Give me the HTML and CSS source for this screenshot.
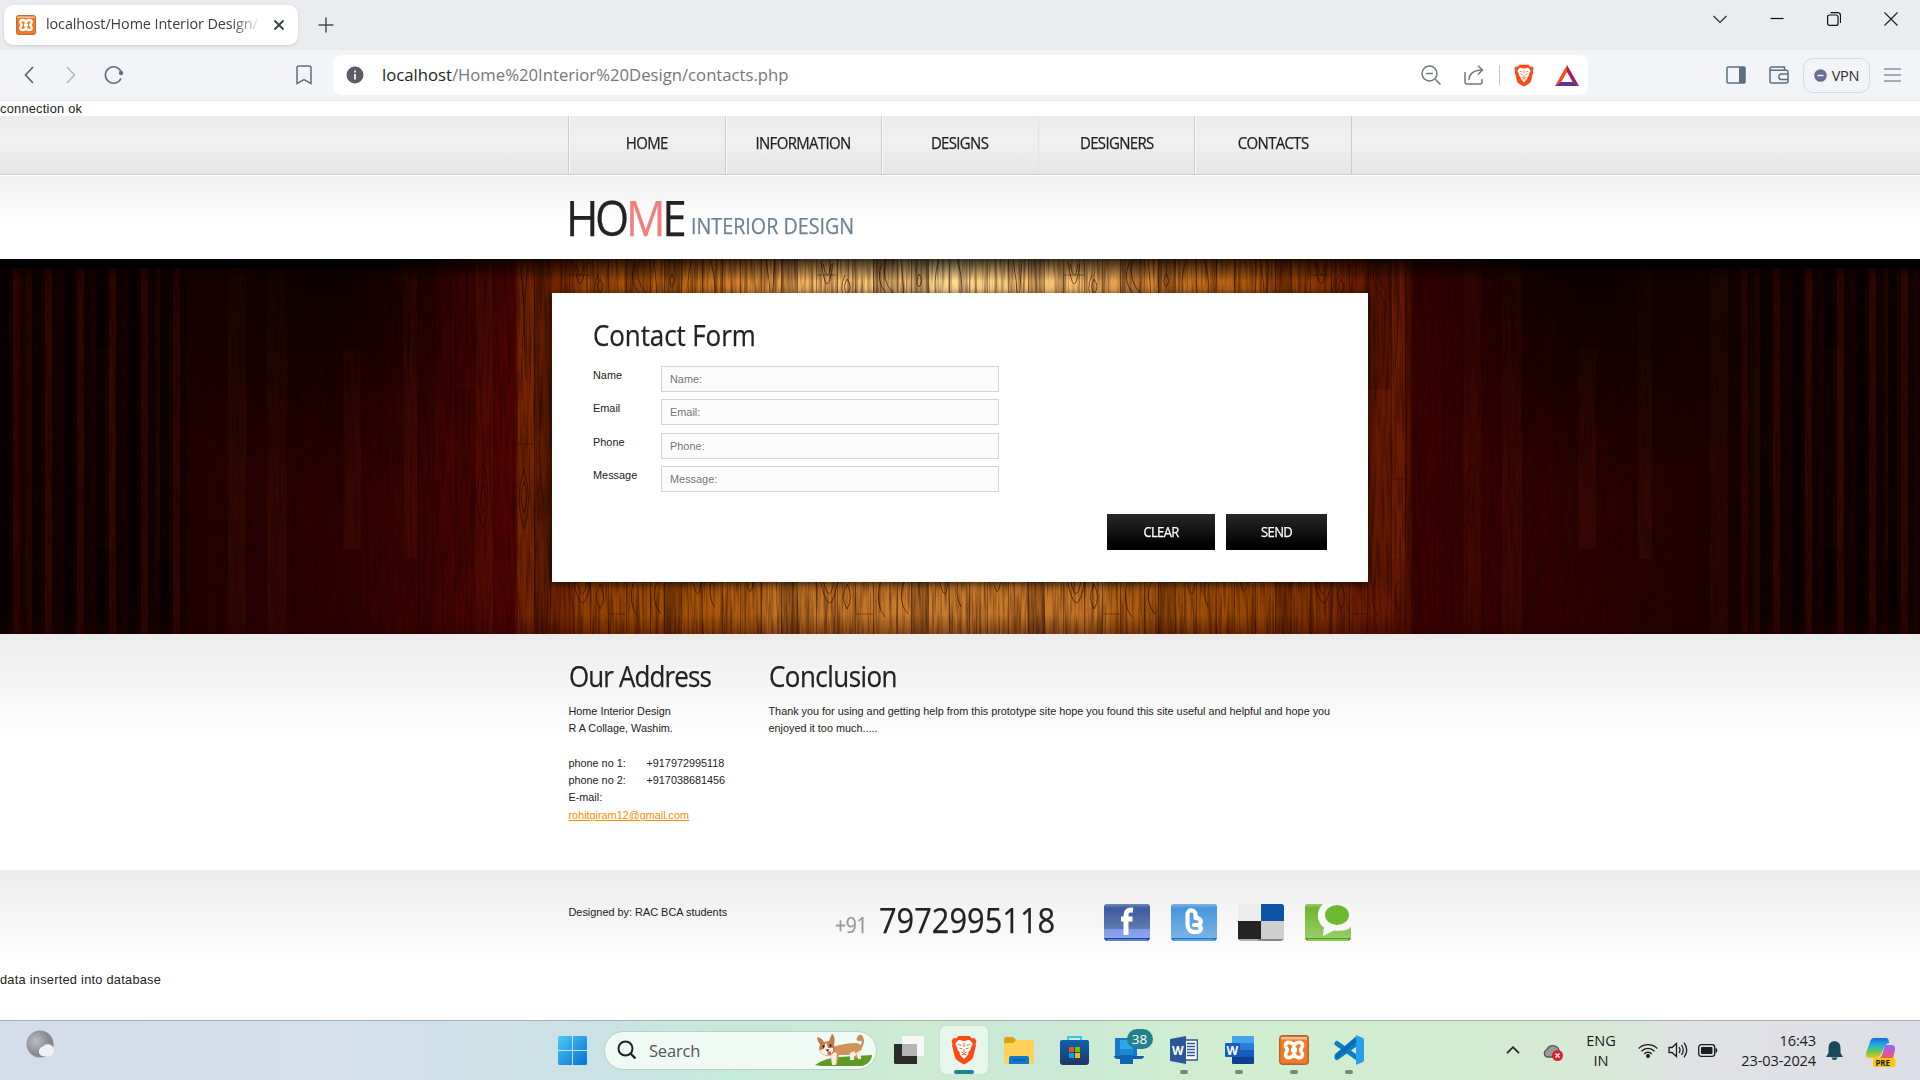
FILE: index.html
```html
<!DOCTYPE html>
<html lang="en">
<head>
<meta charset="utf-8">
<title>Home Interior Design</title>
<link rel="stylesheet" href="styles.css">
</head>
<body>
<svg width="0" height="0" class="defs">
  <defs>
    <symbol id="xampp" viewBox="0 0 30 30">
      <rect x=".7" y=".7" width="28.6" height="28.6" rx="3" fill="#f37a20" stroke="#a8673a" stroke-width="1.4"/>
      <path d="M2 2h26v2.500H2z" fill="#f9b98a"/>
      <path d="M15 11.500c-.5-4.500-7.500-5.500-8.500-1.800-.5 2.300 1.700 3.800 2 5.300-.3 1.500-2.500 3-2 5.300 1 3.700 8 2.700 8.500-1.800.5 4.500 7.500 5.500 8.500 1.800.5-2.300-1.700-3.800-2-5.300.3-1.500 2.500-3 2-5.300-1-3.700-8-2.700-8.500 1.800z" fill="none" stroke="#fff" stroke-width="3.600" stroke-linejoin="round"/>
      <path d="M12 15h6" stroke="#fff" stroke-width="4.500"/>
    </symbol>
    <symbol id="brave" viewBox="0 0 26 30">
      <path d="M7.500 1h11l2.500 2.500 2.500-.5 2 3-1 3 .5 1.500-3 12c-.5 2-5 5-9 7-4-2-8.500-5-9-7L1 10.500 1.500 9 .5 6l2-3L5 3.500z" fill="#fb4a14"/>
      <path d="M13 6c2 0 4-1.500 5.500-.8 1.500.8 3.500 3 3 4.600-.3 1-2 2.200-1.800 3.500.3 1.600-1.500 3.200-2.500 4.200.6 1.500-.5 2.500-1.200 3.500L13 24l-3-3c-.7-1-1.800-2-1.200-3.500-1-1-2.800-2.600-2.500-4.200.2-1.300-1.500-2.500-1.800-3.500-.5-1.600 1.500-3.800 3-4.600C9 4.500 11 6 13 6z" fill="#fff"/>
      <path d="M13 8v4m-5.500-2.500 3 .8M18.500 9.500l-3 .8M8.500 13l2.500.8M17.500 13l-2.500.8M13 14v3m-2.500 0L13 18.500l2.500-1.500M10.500 20l2.500-.8 2.500.8" stroke="#fb4a14" stroke-width=".9" fill="none"/>
    </symbol>
    <linearGradient id="gloss" x2="0" y2="1"><stop offset="0" stop-color="#fff" stop-opacity=".3"/><stop offset=".12" stop-color="#fff" stop-opacity="0"/><stop offset="1" stop-color="#fff" stop-opacity=".28"/></linearGradient>
  </defs>
</svg>

<header class="tabs">
  <div class="tab">
    <svg width="20" height="20"><use href="#xampp"/></svg>
    <span class="tab-title">localhost/Home Interior Design/</span>
    <svg width="12" height="12" viewBox="0 0 12 12"><path d="M1.500 1.500l9 9m0-9l-9 9" stroke="#3c4043" stroke-width="1.800"/></svg>
  </div>
  <svg class="newtab" width="16" height="16" viewBox="0 0 16 16"><path d="M8 .5v15M.5 8h15" stroke="#4a4d52" stroke-width="1.500"/></svg>
  <div class="winctl">
    <svg width="14" height="14" viewBox="0 0 14 14"><path d="M.5 4l6.500 6.500L13.500 4" fill="none" stroke="#222" stroke-width="1.100"/></svg>
    <svg width="14" height="14" viewBox="0 0 14 14"><path d="M.5 6.500h13" stroke="#111" stroke-width="1.200"/></svg>
    <svg width="14" height="14" viewBox="0 0 14 14"><path d="M.6 5c0-1.300.7-2 2-2H9c1.300 0 2 .7 2 2v6.400c0 1.300-.7 2-2 2H2.600c-1.300 0-2-.7-2-2zM3.500.6h7c2 0 3 1 3 3v7.500" fill="none" stroke="#111" stroke-width="1.200"/></svg>
    <svg width="14" height="14" viewBox="0 0 14 14"><path d="M.5.5l13 13m0-13l-13 13" stroke="#222" stroke-width="1.200"/></svg>
  </div>
</header>

<nav class="toolbar">
  <div class="navbtns">
    <svg width="10" height="18" viewBox="0 0 10 18"><path d="M9 1L1.500 9 9 17" fill="none" stroke="#4d6373" stroke-width="1.600"/></svg>
    <svg width="10" height="18" viewBox="0 0 10 18"><path d="M1 1l7.500 8L1 17" fill="none" stroke="#b1bac1" stroke-width="1.600"/></svg>
    <svg width="20" height="20" viewBox="0 0 20 20"><path d="M17 13.500A8.200 8.200 0 1 1 17 6.500" fill="none" stroke="#5b7080" stroke-width="1.600"/><circle cx="17" cy="8" r="2.200" fill="#5b7080"/></svg>
  </div>
  <svg class="bookmark" width="16" height="20" viewBox="0 0 16 20"><path d="M1 3c0-1.300.7-2 2-2h10c1.300 0 2 .7 2 2v15.500l-7-4-7 4z" fill="none" stroke="#5b6f80" stroke-width="1.500"/></svg>
  <div class="urlbar">
    <svg width="18" height="18" viewBox="0 0 18 18"><circle cx="9" cy="9" r="8.500" fill="#5a5d66"/><path d="M9 8v5.500M9 4.500v2" stroke="#fff" stroke-width="1.700"/></svg>
    <span class="url"><b>localhost</b>/Home%20Interior%20Design/contacts.php</span>
    <div class="urlicons">
      <svg width="20" height="20" viewBox="0 0 20 20" fill="none" stroke="#73777e" stroke-width="1.500"><circle cx="8.500" cy="8.500" r="7.500"/><path d="M14 14l5.500 5.500M5 8.500h7"/></svg>
      <svg class="share" width="20" height="20" viewBox="0 0 20 20" fill="none" stroke="#73777e" stroke-width="1.500"><path d="M1 7v10c0 1.400.6 2 2 2h13c1.400 0 2-.6 2-2v-3M5 15c0-6 4-9.500 13-10M14 .8L18.500 5 14 9.500"/></svg>
      <i class="sep"></i>
      <svg width="20" height="23" viewBox="0 0 26 30" preserveAspectRatio="none"><use href="#brave" width="26" height="30"/></svg>
      <svg class="bat" width="24" height="21" viewBox="0 0 24 21"><path d="M12 0L0 21l6-3.500L12 7z" fill="#ff4724"/><path d="M12 0l12 21-6-3.500L12 7z" fill="#9e1f63"/><path d="M0 21l6-4h12l6 4z" fill="#662d91"/></svg>
    </div>
  </div>
  <div class="tools">
    <svg width="20" height="18" viewBox="0 0 20 18"><rect x="1" y="1" width="18" height="16" rx="1" fill="none" stroke="#5b7080" stroke-width="1.500"/><path d="M13 1h6v16h-6z" fill="#5b7080"/></svg>
    <svg width="20" height="18" viewBox="0 0 20 18" fill="none" stroke="#5b7080" stroke-width="1.500"><path d="M1 3v12c0 1.400.6 2 2 2h14c1.200 0 2-.6 2-2V6c0-1-.7-1.700-1.700-1.700H2.500C1.400 4.300 1 3.700 1 3c0-1.300.7-2 2-2h12.500v3"/><path d="M19 8h-6.500a2.500 2.500 0 0 0 0 5.500H19"/></svg>
    <span class="vpn"><svg width="13" height="13" viewBox="0 0 13 13"><circle cx="6.500" cy="6.500" r="6.300" fill="#6b6f94"/><path d="M3.500 6.500h6" stroke="#fff" stroke-width="1.400"/></svg><span>VPN</span></span>
    <svg width="17" height="14" viewBox="0 0 17 14"><path d="M0 1h17M0 7h17M0 13h17" stroke="#8595a1" stroke-width="1.400"/></svg>
  </div>
</nav>

<main class="page">
  <p class="status">connection ok</p>
  <nav class="menu">
    <ul>
      <li><span class="t">HOME</span></li>
      <li><span class="t">INFORMATION</span></li>
      <li><span class="t">DESIGNS</span></li>
      <li class="soft"><span class="t">DESIGNERS</span></li>
      <li><span class="t">CONTACTS</span></li>
    </ul>
  </nav>
  <div class="brand"><div class="wrap">
    <span class="t logo">HO<em>M</em>E</span><span class="t slogan">INTERIOR DESIGN</span>
  </div></div>

  <section class="hero">
    <svg class="wood" width="1920" height="375" viewBox="0 0 1920 375" preserveAspectRatio="none">
      <defs>
        <linearGradient id="base">
          <stop offset="0" stop-color="#160101"/><stop offset=".09" stop-color="#140000"/>
          <stop offset=".1" stop-color="#200100"/><stop offset=".18" stop-color="#2c0100"/><stop offset=".24" stop-color="#460400"/>
          <stop offset=".269" stop-color="#500400"/><stop offset=".27" stop-color="#6b1e00"/>
          <stop offset=".299" stop-color="#7a2a00"/><stop offset=".3" stop-color="#933f00"/>
          <stop offset=".36" stop-color="#a55208"/><stop offset=".398" stop-color="#b06013"/>
          <stop offset=".399" stop-color="#c27222"/><stop offset=".5" stop-color="#cb7d2d"/>
          <stop offset=".577" stop-color="#c07122"/><stop offset=".578" stop-color="#b06013"/>
          <stop offset=".654" stop-color="#954302"/><stop offset=".69" stop-color="#802f00"/>
          <stop offset=".71" stop-color="#6b1c00"/><stop offset=".734" stop-color="#601400"/><stop offset=".736" stop-color="#3f0100"/>
          <stop offset=".8" stop-color="#300100"/><stop offset=".88" stop-color="#200100"/><stop offset=".91" stop-color="#140000"/><stop offset="1" stop-color="#160101"/>
        </linearGradient>
        <radialGradient id="glow" gradientUnits="userSpaceOnUse" cx="950" cy="15" r="390" gradientTransform="matrix(1 0 0 .72 0 4)">
          <stop offset="0" stop-color="#ffdc92"/><stop offset=".35" stop-color="#ffc470" stop-opacity=".88"/><stop offset=".6" stop-color="#f0983c" stop-opacity=".5"/><stop offset="1" stop-color="#c06010" stop-opacity="0"/>
        </radialGradient>
        <radialGradient id="dark" gradientUnits="userSpaceOnUse" cx="0" cy="0" r="400" gradientTransform="translate(330 0) scale(.55 .6)">
          <stop offset="0" stop-color="#000" stop-opacity=".7"/><stop offset="1" stop-color="#000" stop-opacity="0"/>
        </radialGradient>
        <radialGradient id="dark2" href="#dark" gradientUnits="userSpaceOnUse" cx="0" cy="0" r="400" gradientTransform="translate(1590 0) scale(.55 .6)"/>
        <linearGradient id="top" x2="0" y2="1"><stop offset="0" stop-color="#000" stop-opacity=".75"/><stop offset="1" stop-color="#000" stop-opacity="0"/></linearGradient>
        <linearGradient id="bottom" x2="0" y2="1"><stop offset="0" stop-color="#200" stop-opacity="0"/><stop offset="1" stop-color="#200" stop-opacity=".4"/></linearGradient>
        <radialGradient id="corner" cx=".5" cy="0" r=".5"><stop offset="0" stop-color="#000"/><stop offset=".5" stop-color="#000" stop-opacity=".9"/><stop offset="1" stop-color="#000" stop-opacity="0"/></radialGradient>
        <pattern id="planks" x="20" y="0" width="247" height="375" patternUnits="userSpaceOnUse">
          <path d="M20 0h16v375H20zM55 40h21v240H55zM112 0h24v130h-24zM150 0h17v375h-17zM188 130h20v180h-20z" fill="#200400" opacity=".24"/>
          <path d="M0 0h20v375H0zM76 90h18v200H76zM136 0h14v300h-14zM208 0h18v375h-18z" fill="#ff7a30" opacity=".05"/>
          <path d="M.5 0v375M20.500 0v375M36.500 0v375M55.500 0v375M76.500 0v375M94.500 0v375M112.500 0v375M136.500 0v375M150.500 0v375M167.500 0v375M188.500 0v375M208.500 0v375M226.500 0v375M55 16h21M94 355h18M0 185h20M136 220h14M188 130h20" stroke="#1c0400" opacity=".4"/>
          <g fill="none" stroke="#200300" opacity=".6">
            <path d="M5 0q8 45 3 90M14 0q-6 70-2 120M30 245q-8-45-2-110M62 5q5 22 8 0M60 2q6 45 12 2M86 20q-5 9 0 15 6-7 0-15M84 16q-7 14 1 26M121 4q-7 18 4 30l8 18M125 0q-6 21 8 35M140 0q6 50 0 110M158 15q-4 8 0 13 5-6 0-13M178 0q-7 24-2 44M196 0q10 30 0 60"/>
            <path d="M10 210q-10 30 0 60 9-28 0-60M10 222q-5 15 0 32 5-16 0-32M62 320q7 30 11 0M59 320q10 48 18 0M86 325q-7 13 0 25 7-11 0-25M120 320q-7 25 4 38M144 320q-9 22 3 35M178 320q7 30 9 0M198 320q-5 14 2 28M216 205q-12 30 0 65 10-32 0-65M216 225q-5 14 0 28 5-13 0-28M232 320q4 25 8 0"/>
          </g>
        </pattern>
        <pattern id="strips" width="32" height="375" patternUnits="userSpaceOnUse"><path d="M0 0h9v375H0z" fill="#000" opacity=".65"/><path d="M9 0h4v375H9zM20 0h6v375h-6z" fill="#000" opacity=".35"/><path d="M13 0h7v375h-7z" fill="#5a0800" opacity=".35"/></pattern>
        <filter id="grain" x="0" y="0" width="100%" height="100%" color-interpolation-filters="sRGB"><feTurbulence type="fractalNoise" baseFrequency=".38 .018" numOctaves="3" seed="7"/><feColorMatrix values="0 0 0 0 .1  0 0 0 0 .01  0 0 0 0 0  2.800 0 0 0 -1.100"/></filter>
      </defs>
      <rect width="1920" height="375" fill="url(#base)"/>
      <rect width="1920" height="375" fill="url(#glow)"/>
      <rect width="1920" height="375" fill="url(#planks)"/>
      <rect width="192" height="375" fill="url(#strips)"/>
      <rect x="1740" width="180" height="375" fill="url(#strips)"/>
      <rect width="1920" height="375" filter="url(#grain)" opacity=".42"/>
      <rect width="1920" height="375" fill="url(#dark)"/>
      <rect width="1920" height="375" fill="url(#dark2)"/>
      <rect width="1920" height="22" fill="url(#top)"/>
      <rect y="355" width="1920" height="20" fill="url(#bottom)"/>
      <rect x="-100" y="-45" width="780" height="90" fill="url(#corner)"/>
      <rect x="1240" y="-45" width="780" height="90" fill="url(#corner)"/>
      <ellipse cx="290" cy="0" rx="360" ry="18" fill="url(#corner)"/>
      <path d="M0 0h470L360 9H0zM1920 0h-470l110 9h360z"/>
    </svg>
    <form class="card">
      <h2><span class="t h-contact">Contact Form</span></h2>
      <div class="row"><label>Name</label><input placeholder="Name:"></div>
      <div class="row"><label>Email</label><input placeholder="Email:"></div>
      <div class="row"><label>Phone</label><input placeholder="Phone:"></div>
      <div class="row"><label>Message</label><input placeholder="Message:"></div>
      <div class="actions"><button type="button" class="clear"><span class="t">CLEAR</span></button><button type="button" class="send"><span class="t">SEND</span></button></div>
    </form>
  </section>

  <section class="info"><div class="wrap cols">
    <div class="addr">
      <h2><span class="t h-addr">Our Address</span></h2>
      <p>Home Interior Design<br>R A Collage, Washim.</p>
      <dl><dt>phone no 1:</dt><dd>+917972995118</dd><dt>phone no 2:</dt><dd>+917038681456</dd><dt>E-mail:</dt></dl>
      <a>rohitgiram12@gmail.com</a>
    </div>
    <div class="concl">
      <h2><span class="t h-concl">Conclusion</span></h2>
      <p>Thank you for using and getting help from this prototype site hope you found this site useful and helpful and hope you<br>enjoyed it too much.....</p>
    </div>
  </div></section>

  <footer class="foot">
    <div class="wrap footrow">
      <p class="by">Designed by: RAC BCA students</p>
      <div class="tel"><span class="t cc">+91</span><span class="t num">7972995118</span></div>
      <div class="social">
        <svg width="48" height="38" viewBox="0 0 48 38"><rect x="1" y="0" width="46" height="37" rx="4" fill="#1f439c"/><path d="M1 3q0-3 3-3h40q3 0 3 3v31H1z" fill="#3c5a9d"/><path d="M1 25h46v9H1z" fill="#5f84e2"/><rect x="1" width="46" height="34" fill="url(#gloss)"/><path d="M4 36h40" stroke="#6f97ec" stroke-width="1.500"/><path d="M30 6.200c-6-1-7 1.500-7 6V31M18 15h11.500" fill="none" stroke="#fff" stroke-width="5"/></svg>
        <svg width="48" height="38" viewBox="0 0 48 38"><rect x="1" width="46" height="37" rx="4" fill="#1b77c4"/><path d="M1 3q0-3 3-3h40q3 0 3 3v31H1z" fill="#4796da"/><rect x="1" width="46" height="34" fill="url(#gloss)"/><path d="M4 36h40" stroke="#66b6f5" stroke-width="1.500"/><path d="M17.500 10.500V20c0 5 2.500 8 7 8h2c5.500 0 5.500-5.500 1.500-7 4-1.500 3.500-6.500-.5-6.500M17.500 10.500c0-6 8-5 8 0v3.500q3 .5 2 0M24 21h4" fill="none" stroke="#fff" stroke-width="4.200" stroke-linecap="round" stroke-linejoin="round"/></svg>
        <svg width="48" height="38" viewBox="0 0 48 38"><rect x="1" width="46" height="37" rx="4" fill="#888"/><path d="M1 17h23v18H1z" fill="#242424"/><path d="M4 0h20v17H1V3q0-3 3-3z" fill="#ececec"/><path d="M24 0h20q3 0 3 3v14H24z" fill="#0b55a5"/><path d="M24 17h23v18H24z" fill="#cfcfcf"/><path d="M3 36h18" stroke="#bbb" stroke-width="1.500"/></svg>
        <svg width="48" height="38" viewBox="0 0 48 38"><rect x="1" width="46" height="37" rx="4" fill="#4d9e1e"/><path d="M1 3q0-3 3-3h40q3 0 3 3v31H1z" fill="#6fb82f"/><rect x="1" width="46" height="34" fill="url(#gloss)"/><path d="M4 36h40" stroke="#9ddb60" stroke-width="1.500"/><path d="M19 0h26q2 0 2 2v21q-5 5-17 3.500L19 32l1-8.500C12 18 12 6 19 0z" fill="#f8f8f8"/><ellipse cx="33" cy="11" rx="12" ry="10" fill="#6fb930"/></svg>
      </div>
    </div>
    <p class="dbmsg">data inserted into database</p>
  </footer>
</main>

<div class="taskbar">
  <svg class="weather" width="30" height="30" viewBox="0 0 30 30"><defs><radialGradient id="mn" cx=".35" cy=".4"><stop offset="0" stop-color="#b9bdc3"/><stop offset="1" stop-color="#85898f"/></radialGradient></defs><circle cx="14" cy="14" r="13.500" fill="url(#mn)"/><path d="M16 26a5 5 0 0 1 1-9.500 6 6 0 0 1 10.500 2c1.500 4-1 8-5.500 8z" fill="#eef1f5"/></svg>
  <div class="apps">
    <svg class="start" width="29" height="29" viewBox="0 0 29 29"><defs><linearGradient id="win" gradientUnits="userSpaceOnUse" x2="29" y2="29"><stop offset="0" stop-color="#4fc8fa"/><stop offset="1" stop-color="#0471cf"/></linearGradient></defs><path d="M1 0h13v14H0V1zM15 0h13l1 1v13H15zM0 15h14v14H1l-1-1zM15 15h14v13l-1 1H15z" fill="url(#win)"/></svg>
    <div class="search">
      <svg width="20" height="20" viewBox="0 0 20 20" fill="none" stroke="#222" stroke-width="2"><circle cx="8.500" cy="8.500" r="7"/><path d="M13.500 13.500l5 5" stroke-width="2.400"/></svg>
      <span>Search</span>
      <svg class="dog" width="58" height="34" viewBox="0 0 58 34">
        <path d="M0 32q10-7 24-8l33-2c0 5-5 10-10 11H6z" fill="#5d9a26"/>
        <path d="M42 13q6-1 4.500-5.500-2.500 1.500-5-.5 1-6 5-5 5 4 0 14z" fill="#c98a55"/>
        <path d="M15 15q13-5 27-5 6 2 4 9l-2 6h-4l1-5-8 2H24l-2 9h-5z" fill="#d0935c"/>
        <path d="M12 17l10 3-1 12h-4l-1-8-3-2zM35 20l5-2-1 9h-4zM41 20l5-3v9h-3z" fill="#f6ebdd"/>
        <path d="M2 4q5 1 7 5l5-1L17 .5q4 4 2 11l1 6q-3 6-9 5-6-1-7-7l1-4Q2 8 2 4z" fill="#c07c49"/><path d="M11 9l2 6 5 0q1 6-6 7-6 0-7-5l4-1z" fill="#fbf3e9"/>
        <circle cx="8.500" cy="13.500" r="1"/><circle cx="15.500" cy="12.500" r="1"/><path d="M10.500 16.500h4l-2 2z"/><path d="M12 18.500h4v4l-3-1z" fill="#e25563"/>
      </svg>
    </div>
    <div class="app"><svg width="30" height="28" viewBox="0 0 30 28"><path d="M0 8h23v20H1l-1-1z" fill="#2b2b2b"/><path d="M8 0h21l1 1v19H8z" fill="#fafafa" opacity=".9"/><path d="M8 8h15v12H8z" fill="#b5b5b5"/></svg></div>
    <div class="app active"><svg width="26" height="30"><use href="#brave"/></svg><i class="bar"></i></div>
    <div class="app"><svg width="30" height="27" viewBox="0 0 30 27"><path d="M0 2q0-2 2-2h7l3 3h17v9H0z" fill="#dfa00b"/><path d="M0 6h9l3-3h16q2 0 2 2v22H2q-2 0-2-2z" fill="#ffd158"/><path d="M5 21q0-2 2-2h16q2 0 2 2v6H5z" fill="#0f7ac9"/><path d="M9 23h12" stroke="#0b5597" stroke-width="1.500"/></svg></div>
    <div class="app"><svg width="29" height="29" viewBox="0 0 29 29"><defs><linearGradient id="st" x2="0" y2="1"><stop offset="0" stop-color="#0d63ad"/><stop offset="1" stop-color="#213565"/></linearGradient></defs><path d="M8 5V1h13v4" fill="none" stroke="#35c3ef" stroke-width="1.800"/><path d="M0 6q0-2 2-2h25q2 0 2 2v20q0 3-3 3H3q-3 0-3-3z" fill="url(#st)"/><path d="M9 11h5v5H9z" fill="#f25022"/><path d="M15 11h5v5h-5z" fill="#7fba00"/><path d="M9 17h5v5H9z" fill="#00a4ef"/><path d="M15 17h5v5h-5z" fill="#ffb900"/></svg></div>
    <div class="app"><svg width="30" height="28" viewBox="0 0 30 28"><path d="M1 2h22v20H1z" fill="#1479c8"/><path d="M0 20h30q0 3-4 3H4q-4 0-4-3z" fill="#0e5ea8"/><path d="M6 4h13v23H6z" fill="#2ba7ea"/><path d="M6 13h13v6H6z" fill="#1a8ad6"/><path d="M6 19h13v9H6z" fill="#1166b3"/></svg><span class="badge">38</span></div>
    <div class="app"><svg width="28" height="28" viewBox="0 0 28 28"><path d="M14 4h13.300v20H14z" fill="#fff" stroke="#2b579a" stroke-width="1.300"/><path d="M17 7.500h8M17 10.500h8M17 13.500h8M17 16.500h8M17 19.500h8" stroke="#2b579a" stroke-width="1.400"/><path d="M0 3l16-3v28L0 25z" fill="#2b579a"/><text x="2" y="18.500" class="w">W</text></svg><i class="dot"></i></div>
    <div class="app"><svg width="29" height="28" viewBox="0 0 29 28"><path d="M7 1q0-1 1-1h20q1 0 1 1v6H7z" fill="#41a5ee"/><path d="M7 7h22v7H7z" fill="#2b7cd3"/><path d="M7 14h22v7H7z" fill="#185abd"/><path d="M7 21h22v6q0 1-1 1H8q-1 0-1-1z" fill="#103f91"/><rect y="7" width="15" height="14" rx="1" fill="#185abd"/><text x="1.500" y="18.500" class="w">W</text></svg><i class="dot"></i></div>
    <div class="app"><svg width="30" height="30"><use href="#xampp"/></svg><i class="dot"></i></div>
    <div class="app"><svg width="30" height="30" viewBox="0 0 30 30"><path d="M22.500 8.500L3 22.500M3 8.500l19.500 14" stroke="#0b7fc9" stroke-width="5" stroke-linecap="round"/><path d="M3 20.500L22.500 4" stroke="#0a6db5" stroke-width="4.500" stroke-linecap="round"/><path d="M22 0l7 3q1 .5 1 1.500v21q0 1-1 1.500l-7 3z" fill="#27a1ee"/></svg><i class="dot"></i></div>
  </div>
  <div class="tray">
    <svg class="chev" width="14" height="8" viewBox="0 0 14 8"><path d="M1 7.200L7 1.200l6 6" fill="none" stroke="#222" stroke-width="1.700"/></svg>
    <svg class="cloud" width="20" height="17" viewBox="0 0 20 17"><path d="M4 13a4 4 0 0 1 0-7.500A6.500 6.500 0 0 1 15 4q2 3 1 9z" fill="#999" stroke="#555" stroke-width="1.300"/><circle cx="14.500" cy="11.500" r="5.500" fill="#d9232e"/><path d="M12.500 9.500l4 4m0-4l-4 4" stroke="#fff" stroke-width="1.300"/></svg>
    <span class="lang">ENG<br>IN</span>
    <svg class="wifi" width="20" height="15" viewBox="0 0 20 15" fill="none" stroke="#1c1c1c" stroke-width="1.400"><path d="M.7 5.500a13 13 0 0 1 18.600 0M3.500 8.200a9 9 0 0 1 13 0M6.200 10.900a5.300 5.300 0 0 1 7.600 0"/><circle cx="10" cy="13" r="1.300" fill="#1c1c1c"/></svg>
    <svg class="spk" width="20" height="18" viewBox="0 0 20 18" fill="none" stroke="#1c1c1c" stroke-width="1.300"><path d="M1 6.500h3l4.500-4v13L4 11.500H1zM11 6q2 3 0 6M13.500 4q3.500 5 0 10M16 1.700q5.500 7.300 0 14.600"/></svg>
    <svg class="batt" width="20" height="13" viewBox="0 0 20 13"><rect x=".7" y=".7" width="16" height="11.600" rx="2.500" fill="none" stroke="#1c1c1c" stroke-width="1.300"/><rect x="3" y="3" width="11.500" height="7" rx="1" fill="#1c1c1c"/><path d="M18 4.500q2 2 0 4z" fill="#1c1c1c" stroke="#1c1c1c"/></svg>
    <span class="clock">16:43<br>23-03-2024</span>
    <svg class="bell" width="17" height="19" viewBox="0 0 17 19"><path d="M8.500 0q6 .5 6 7v5l2.500 4H0l2.500-4V7q0-6.500 6-7zM5.500 16.500h6q-.5 2.500-3 2.500t-3-2.500z" fill="#17495a"/></svg>
    <svg class="copilot" width="30" height="29" viewBox="0 0 30 29"><defs><linearGradient id="c1" x1="0" x2="0" y2="1"><stop offset="0" stop-color="#1a66d6"/><stop offset=".35" stop-color="#1fb0e8"/><stop offset=".65" stop-color="#62c554"/><stop offset="1" stop-color="#f0c514"/></linearGradient><linearGradient id="c2" x2="0" y2="1"><stop offset="0" stop-color="#8a6cf0"/><stop offset=".5" stop-color="#d350c8"/><stop offset="1" stop-color="#f0604c"/></linearGradient></defs><path d="M8 0h12q3 0 3 5-4 1-6 7l-3 6q-1 2-4 2H4q-5 0-4-5L4 4q1-4 4-4z" fill="url(#c1)"/><path d="M19 7h6q5 0 4 5l-2 8H14q2-2 3-6z" fill="url(#c2)"/><rect x="7" y="20" width="22.500" height="9" rx="2" fill="#fcc50f"/><text x="9.500" y="27.500" class="pre">PRE</text></svg>
  </div>
</div>
</body>
</html>
```
FILE: styles.css
```css
* { box-sizing: border-box; }
body { margin: 0; width: 1920px; height: 1080px; overflow: hidden; display: flex; flex-direction: column; background: #fff; font-family: "Liberation Sans", Arial, sans-serif; color: #222; }
h2, p, ul, dl, dd { margin: 0; padding: 0; font-weight: normal; }
svg { display: block; flex: none; }
.defs { position: absolute; }

/* browser chrome */
.tabs { height: 50px; flex: none; display: flex; background: #ebecf0; padding-left: 4px; font-family: "Open Sans", sans-serif; }
.tab { width: 294px; height: 40px; margin-top: 5px; padding: 0 12px; background: #fff; border-radius: 9px; display: flex; align-items: center; box-shadow: 0 1px 3px #0002; }
.tab-title { width: 214px; margin: 0 13px 0 10px; font-size: 14.400px; line-height: 20px; padding-bottom: 2px; letter-spacing: -.1px; white-space: nowrap; overflow: hidden; color: #3a3c40; -webkit-mask-image: linear-gradient(90deg, #000 185px, transparent 216px); mask-image: linear-gradient(90deg, #000 185px, transparent 216px); }
.newtab { margin: 17px 0 0 20px; }
.winctl { margin: 12px 22px 0 auto; display: flex; gap: 43px; }
.toolbar { height: 51px; flex: none; display: flex; align-items: center; background: #f2f4f7; border-bottom: 1px solid #e8eaee; font-family: "Open Sans", sans-serif; }
.navbtns { display: flex; align-items: center; gap: 32px; padding-left: 24px; width: 296px; }
.navbtns svg:last-child { margin-left: -4px; }
.bookmark { margin-right: 21px; }
.urlbar { width: 1255px; height: 40px; border-radius: 9px; background: #fff; display: flex; align-items: center; padding: 0 9px 0 13px; }
.url { margin-left: 18px; padding-bottom: 2px; font-size: 16.700px; color: #74777c; white-space: nowrap; letter-spacing: 0; }
.url b { font-weight: normal; color: #1d1f22; }
.urlicons { margin-left: auto; display: flex; align-items: center; }
.share { margin-left: 23px; }
.sep { width: 1px; height: 20px; background: #c2c5ca; margin: 0 14px 0 15px; }
.bat { margin-left: 21px; }
.tools { display: flex; align-items: center; margin-left: auto; padding-right: 19px; }
.tools > svg:nth-child(2) { margin-left: 23px; }
.vpn { width: 67px; height: 35px; margin: 0 14px 0 14px; border: 1.500px solid #d6dbe2; border-radius: 10px; display: flex; align-items: center; justify-content: center; gap: 5px; font-size: 14.500px; letter-spacing: -.2px; color: #2a2b30; }

/* site */
.page { flex: 1; display: flex; flex-direction: column; }
.wrap { width: 783px; margin: 0 auto; }
.t { display: inline-block; white-space: nowrap; font-family: "Open Sans", sans-serif; transform: scaleX(.88); transform-origin: 0 50%; letter-spacing: -1px; -webkit-text-stroke: .25px currentColor; }
.status { height: 15px; font-size: 12.800px; line-height: 16px; letter-spacing: .25px; }
.menu { height: 60px; background: linear-gradient(#ececec, #f0f0f0 45%, #e6e6e6 97%); border-bottom: 1px solid #fff; box-shadow: inset 0 -1px #ccc; }
.menu ul { list-style: none; width: 784px; height: 58px; margin: 0 auto; display: flex; border-right: 1px solid #ccc; }
.menu li { flex: 1; border-left: 1px solid #ccc; box-shadow: inset 1px 0 #fafafa; text-align: center; font-size: 17px; line-height: 54px; color: #222; }
.menu li.soft { border-color: #e2e2e2; box-shadow: none; }
.menu .t { transform-origin: 50% 50%; letter-spacing: -.75px; }
.brand { height: 83px; background: linear-gradient(#f0f0f0, #fff 60%); }
.brand .wrap { display: flex; align-items: baseline; height: 83px; }
.logo { font-size: 50px; line-height: 83px; width: 125px; margin-left: -3px; color: #222; letter-spacing: -3.800px; }
.logo em { font-style: normal; color: #f08080; }
.slogan { font-size: 22.400px; color: #708090; letter-spacing: 0; position: relative; top: -2px; }
.hero { position: relative; height: 375px; padding-top: 34px; border-bottom: 1px solid #fff; }
.wood { position: absolute; inset: 0; }
.card { position: relative; width: 816px; height: 289px; margin: 0 auto; background: #fff; padding: 23px 41px 0; box-shadow: 0 2px 9px #000c; }
h2 { font-size: 29.500px; line-height: 38px; color: #222; }
.h-contact { letter-spacing: -.1px; }
.h-concl { letter-spacing: -.6px; }
.row { display: flex; height: 33.300px; font-size: 10.400px; }
.card h2 { margin-bottom: 11px; }
.row label { width: 68px; line-height: 19px; font-size: 10.900px; color: #222; }
.row input { width: 338px; height: 26px; border: 1px solid #d4d4d4; background: #fcfcfc; padding: 0 8px; font: 10.900px "Liberation Sans", sans-serif; border-radius: 0; }
.actions { display: flex; justify-content: flex-end; gap: 11px; margin-top: 14.500px; }
.actions button { height: 36px; border: 0; padding: 0; background: linear-gradient(#282828, #000 90%); color: #fff; }
.actions .t { transform-origin: 50% 50%; font-size: 14.800px; letter-spacing: -.75px; position: relative; top: -1px; }
.clear { width: 108px; }
.send { width: 101px; }
.info { height: 236px; padding-top: 23px; background: linear-gradient(#ececec, #fff 105px); font-size: 10.830px; line-height: 17.300px; }
.cols { display: flex; }
.addr { width: 200px; }
.info h2 { margin-bottom: 7px; }
.addr dl { margin-top: 17px; display: grid; grid-template-columns: 78px 1fr; line-height: 17.200px; }
.addr a { display: block; padding-top: 1px; color: #ff8d00; text-decoration: underline; }
.concl p { white-space: nowrap; }
.foot { flex: 1; background: linear-gradient(#ececec, #fff 95px); }
.footrow { display: flex; height: 97px; }
.by { width: 267px; padding-top: 35px; font-size: 10.900px; line-height: 15px; }
.tel { width: 268px; display: flex; align-items: baseline; height: 100px; padding-top: 4px; }
.tel .cc { width: 44px; font-size: 22px; color: #999; line-height: 100px; letter-spacing: -.4px; }
.tel .num { font-size: 35px; letter-spacing: 0; color: #222; }
.social { display: flex; gap: 19px; padding-top: 34px; }
.dbmsg { font-size: 12.800px; line-height: 26px; letter-spacing: .25px; }

/* taskbar */
.taskbar { height: 60px; flex: none; display: flex; align-items: flex-start; border-top: 1px solid #a9b0b2; font-family: "Open Sans", sans-serif; color: #1c1c1c; background: linear-gradient(90deg, #d4dce9 0, #d3dfe9 20%, #c9e2e5 31%, #c5e9da 38%, #cdebd2 48%, #c9e8d6 54%, #d0eecf 62%, #d2ecd0 77%, #d8e8d8 84%, #e0e2e4 88%, #dcdee7 100%); }
.weather { margin: 9px 0 0 26px; }
.apps { display: flex; align-items: center; margin-left: 502px; height: 58px; }
.search { width: 273px; height: 39px; margin: 0 4.500px 0 17px; border-radius: 20px; background: #effaf5; border: 1px solid #b9cfc8; display: flex; align-items: center; padding: 0 3px 0 12px; font-size: 16.500px; color: #555; letter-spacing: -.2px; }
.search span { margin-left: 12px; }
.dog { margin-left: auto; }
.app { position: relative; width: 55px; height: 48px; display: flex; align-items: center; justify-content: center; }
.active { width: 48px; margin: 0 3.500px; background: #e7f6ea; border-radius: 5px; box-shadow: 0 0 1px #0004; }
.bar, .dot { position: absolute; bottom: 0; left: 50%; height: 4px; border-radius: 2px; transform: translateX(-50%); }
.bar { width: 20px; background: #23808f; }
.dot { width: 8px; background: #76867a; }
.badge { position: absolute; left: 25px; top: 3px; width: 26px; height: 20px; border-radius: 10px; background: #23808f; color: #fff; font-size: 13.500px; line-height: 20px; text-align: center; }
.w { font: bold 12px "Open Sans", sans-serif; fill: #fff; }
.tray { margin-left: auto; display: flex; align-items: center; height: 58px; font-size: 14.600px; line-height: 20px; letter-spacing: -.15px; padding-right: 24px; }
.cloud { margin-left: 23px; margin-top: 4px; }
.lang { width: 60px; margin-left: 9px; padding-right: 2px; text-align: center; }
.wifi { margin-left: 6px; }
.spk { margin-left: 10px; }
.batt { margin-left: 10px; }
.clock { width: 98px; text-align: right; white-space: nowrap; }
.bell { margin-left: 10px; }
.copilot { margin-left: 23px; margin-top: 5px; }
.pre { font: bold 8px "Open Sans", sans-serif; fill: #222; }
```
